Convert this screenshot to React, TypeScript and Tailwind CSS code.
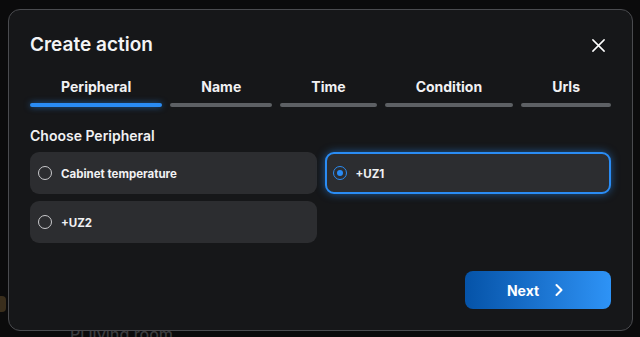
import { ChevronRight } from "lucide-react";

const steps = ["Peripheral", "Name", "Time", "Condition", "Urls"];

const options = [
  { label: "Cabinet temperature", selected: false },
  { label: "+UZ1", selected: true },
  { label: "+UZ2", selected: false },
];

export default function App() {
  return (
    <div
      className="relative w-[640px] h-[337px] overflow-hidden bg-[#0b0b0c]"
      style={{ fontFamily: "Inter, 'Noto Sans', sans-serif" }}
    >
      {/* faded page behind the overlay */}
      <div className="absolute left-[70px] top-[322px] text-[16px] font-medium text-[#3a3b3d]">Pi living room</div>
      <div className="absolute left-[-18px] top-[296px] w-[24px] h-[16px] rounded bg-[#3a2e1c]"></div>

      <div className="relative pt-[9px] pl-[8px]">
        <div className="w-[625px] h-[322px] rounded-[12px] border border-[#4a4b4f] bg-[#161719] px-[21px] pt-[21px] flex flex-col">
          {/* Header */}
          <div className="flex items-center justify-between h-[28px]">
            <h1 className="text-[19px] font-semibold text-[#f4f4f5] leading-[28px]">Create action</h1>
            <button className="mr-[5px] text-white">
              <svg width="15" height="15" viewBox="0 0 16 16" fill="none" stroke="currentColor" strokeWidth="1.6" strokeLinecap="round">
                <path d="M2 2 L14 14 M14 2 L2 14" />
              </svg>
            </button>
          </div>

          {/* Stepper */}
          <div className="flex gap-[8px] mt-[19px]">
            {steps.map((s, i) => (
              <div key={s} className="flex-auto flex flex-col items-center">
                <span className="text-[14px] font-bold leading-[18px] text-[#f1f1f3]">{s}</span>
                <div
                  className={`mt-[7px] w-full h-[4px] rounded-full ${
                    i === 0 ? "bg-[#2a8cf4] shadow-[0_0_6px_rgba(42,140,244,0.6)]" : "bg-[#5d6064]"
                  }`}
                ></div>
              </div>
            ))}
          </div>

          <h2 className="mt-[19px] text-[14px] font-semibold leading-[20px] text-[#f1f1f3]">Choose Peripheral</h2>

          {/* Options */}
          <div className="mt-[6px] grid grid-cols-2 gap-x-[8px] gap-y-[7px]">
            {options.map((o) => (
              <div
                key={o.label}
                className={`h-[42px] rounded-[9px] bg-[#2c2d30] border-2 flex items-center pl-[6px] ${
                  o.selected ? "border-[#2a8cf4] shadow-[0_0_8px_rgba(42,140,244,0.55)]" : "border-transparent"
                }`}
              >
                {o.selected ? (
                  <span className="w-[14px] h-[14px] rounded-full border-[1.5px] border-[#2a8cf4] flex items-center justify-center">
                    <span className="w-[6px] h-[6px] rounded-full bg-[#2a8cf4]"></span>
                  </span>
                ) : (
                  <span className="w-[14px] h-[14px] rounded-full border-[1.5px] border-[#c9c9cc]"></span>
                )}
                <span className="ml-[9px] mt-[2px] text-[11.5px] leading-[16px] font-bold text-[#f1f1f3]">{o.label}</span>
              </div>
            ))}
          </div>

          {/* Footer */}
          <div className="mt-auto mb-[21px] flex justify-end">
            <button className="w-[146px] h-[38px] rounded-[8px] bg-gradient-to-r from-[#0553a8] to-[#2e93f6] flex items-center justify-center gap-[10px] text-white">
              <span className="text-[14px] font-bold">Next</span>
              <ChevronRight size={20} strokeWidth={2.5} />
            </button>
          </div>
        </div>
      </div>
    </div>
  );
}
